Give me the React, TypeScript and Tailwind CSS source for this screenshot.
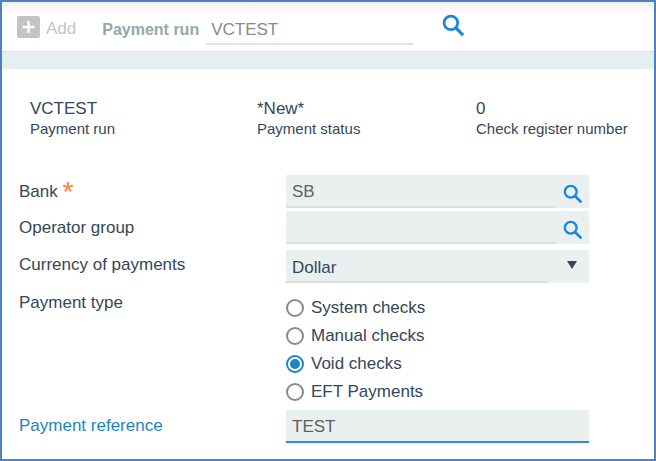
import { useState } from 'react'

const paymentTypes = [
  'System checks',
  'Manual checks',
  'Void checks',
  'EFT Payments',
]

const summary = [
  { label: 'Payment run', value: 'VCTEST' },
  { label: 'Payment status', value: '*New*' },
  { label: 'Check register number', value: '0' },
]

function SearchIcon({ size }: { size: number }) {
  return (
    <svg width={size} height={size} viewBox="0 0 22 22" fill="none" stroke="#1a86dc">
      <circle cx="8.5" cy="8.5" r="6.5" strokeWidth="2.6" />
      <path d="M13.2 13.2 20.2 20.2" strokeWidth="3" />
    </svg>
  )
}

type LookupProps = {
  id: string
  label: string
  defaultValue?: string
}

function LookupField({ id, label, defaultValue }: LookupProps) {
  return (
    <div className="flex h-[33px] bg-[#eaf0f0]">
      <input
        id={id}
        type="text"
        defaultValue={defaultValue}
        className="min-w-0 flex-1 border-b-2 border-[#dcdfe0] px-[6px] pt-[3px] text-[#5f5f5f] outline-none"
      />
      <button
        type="button"
        aria-label={`Search ${label}`}
        className="flex w-[33px] items-center justify-center pt-[4px]"
      >
        <SearchIcon size={20} />
      </button>
    </div>
  )
}

function Toolbar() {
  return (
    <header className="flex h-[49px] items-start bg-linear-to-b from-[#efefef] to-white to-25% pt-[12px] pl-[15px]">
      <button type="button" className="flex items-center gap-[6px] text-[#c3c5c6]">
        <svg width="23" height="23" viewBox="0 0 23 23">
          <rect y="1" width="23" height="22" rx="2" fill="#c3c4c6" />
          <path d="M11.5 6v12M5.5 12h12" stroke="#fff" strokeWidth="2.4" />
        </svg>
        <span className="pt-[5px]">Add</span>
      </button>
      <label htmlFor="run" className="pt-[6px] pl-[26px] text-[16px] font-bold text-[#93a8ad]">
        Payment run
      </label>
      <input
        id="run"
        type="text"
        defaultValue="VCTEST"
        className="ml-[7px] h-[31px] w-[207px] border-b-2 border-[#e3e3e3] px-[5px] pt-[2px] text-[#8a8a8a] outline-none"
      />
      <button type="button" aria-label="Search payment run" className="pl-[29px]">
        <SearchIcon size={23} />
      </button>
    </header>
  )
}

function App() {
  const [type, setType] = useState('Void checks')

  return (
    <div className="min-h-screen border-2 border-[#4f81bd] bg-white font-['Liberation_Sans',Arial,sans-serif] text-[17px] leading-[20px] text-[#34465a]">
      <Toolbar />
      <div className="h-[18px] border-t border-[#dce4e8] bg-[#e6eef2]" />

      <dl className="grid grid-cols-[227fr_219fr_178fr] pt-[30px] pl-[28px]">
        {summary.map((item) => (
          <div key={item.label} className="flex flex-col-reverse">
            <dt className="text-[15px]">{item.label}</dt>
            <dd>{item.value}</dd>
          </div>
        ))}
      </dl>

      <form className="grid grid-cols-[267px_minmax(0,303px)] pt-[36px] pb-[16px] pl-[17px]">
        <label htmlFor="bank" className="flex gap-[5px] pt-[7px]">
          Bank
          <svg width="10" height="10" viewBox="0 0 10 10" stroke="#fb9150" strokeWidth="2.2">
            <path d="M5 5V0M5 5 .2 3.6M5 5 9.8 3.6M5 5 2 9.4M5 5 8 9.4" />
          </svg>
        </label>
        <LookupField id="bank" label="bank" defaultValue="SB" />

        <label htmlFor="group" className="pt-[10px]">
          Operator group
        </label>
        <div className="pt-[3px]">
          <LookupField id="group" label="operator group" />
        </div>

        <label htmlFor="currency" className="pt-[11px]">
          Currency of payments
        </label>
        <div className="pt-[6px]">
          <div className="relative bg-[#eaf0f0]">
            <select
              id="currency"
              className="block h-[33px] w-full appearance-none px-[6px] pt-[2px] outline-none"
            >
              <option>Dollar</option>
            </select>
            <span className="pointer-events-none absolute bottom-0 left-0 right-[41px] h-[2px] bg-[#dcdfe0]" />
            <svg
              width="10"
              height="8"
              viewBox="0 0 10 8"
              className="pointer-events-none absolute top-[11px] right-[12px]"
            >
              <path d="M0 0h10L5 8z" fill="#34465a" />
            </svg>
          </div>
        </div>

        <span id="type-label" className="pt-[10px]">
          Payment type
        </span>
        <div role="radiogroup" aria-labelledby="type-label" className="pt-[11px]">
          {paymentTypes.map((name) => (
            <label key={name} className="flex h-[28px] items-center gap-[7px]">
              <input
                type="radio"
                name="type"
                checked={type === name}
                onChange={() => setType(name)}
                className="grid size-[18px] appearance-none place-items-center rounded-full border-2 border-[#8a8a8a] before:size-[10px] before:rounded-full checked:border-[#1a86c4] checked:before:bg-[#1a86c4]"
              />
              {name}
            </label>
          ))}
        </div>

        <label htmlFor="reference" className="pt-[10px] text-[#1d86c4]">
          Payment reference
        </label>
        <div className="pt-[4px]">
          <input
            id="reference"
            type="text"
            defaultValue="TEST"
            className="block h-[33px] w-full border-b-2 border-[#2b8fc8] bg-[#eaf0f0] px-[6px] pt-[3px] text-[#5f5f5f] outline-none"
          />
        </div>
      </form>
    </div>
  )
}

export default App
